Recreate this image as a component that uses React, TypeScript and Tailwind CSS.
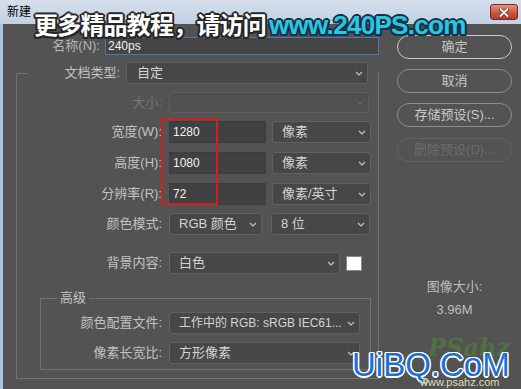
import type { ReactNode } from 'react';

const FONT = "font-['Liberation_Sans','Noto_Sans_CJK_SC',sans-serif]";

function Chevron({ dim }: { dim?: boolean }) {
  return (
    <svg width="8" height="5" viewBox="0 0 8 5" className="shrink-0">
      <path d="M1 1l3 3 3-3" fill="none" stroke={dim ? '#686868' : '#c4c4c4'} strokeWidth="1.2" />
    </svg>
  );
}

function Select({ value, className, disabled }: { value?: string; className: string; disabled?: boolean }) {
  return (
    <div
      className={`flex h-[22px] items-center justify-between rounded-[3px] border pl-[9px] pr-[4px] text-[13px] ${
        disabled ? 'border-[#5e5e5e] bg-[#505050]' : 'border-[#606060] bg-[#474747] text-[#d4d4d4]'
      } ${className}`}
    >
      <span className="overflow-hidden whitespace-nowrap">{value}</span>
      <Chevron dim={disabled} />
    </div>
  );
}

function NumInput({ value }: { value: string }) {
  return (
    <div className="flex h-[22px] w-[97px] items-center border border-[#3c3c3c] bg-[#414141] pl-[3px] text-[12px] text-[#f2f2f2]">
      {value}
    </div>
  );
}

function Row({ label, labelW, dim, children }: { label: string; labelW: string; dim?: boolean; children: ReactNode }) {
  return (
    <div className="flex h-[22px] items-center">
      <span className={`${labelW} shrink-0 text-right text-[13px] ${dim ? 'text-[#767676]' : 'text-[#c2c2c2]'}`}>{label}</span>
      <div className="ml-[7px] flex items-center">{children}</div>
    </div>
  );
}

function Btn({ label, primary, disabled }: { label: string; primary?: boolean; disabled?: boolean }) {
  const tone = disabled
    ? 'border-[#626262] text-[#6c6c6c]'
    : primary
      ? 'border-[#c9c9c9] text-[#c4c4c4]'
      : 'border-[#8c8c8c] text-[#c8c8c8]';
  return (
    <button className={`flex h-[24px] w-[115px] items-center justify-center rounded-full border text-[13px] ${tone}`}>
      {label}
    </button>
  );
}

export default function App() {
  return (
    <div className={`relative h-[389px] w-[521px] overflow-hidden bg-[#535353] ${FONT}`}>
      {/* title bar */}
      <div className="flex h-[24px] items-center justify-between bg-gradient-to-b from-[#d4dfeb] to-[#c1d1e3] pl-[7px] pr-[3px]">
        <span className="text-[12px] text-black">新建</span>
        <div className="flex h-[16px] w-[28px] items-center justify-center rounded-[3px] border border-[#7a2a22] bg-gradient-to-b from-[#e3907f] via-[#cf5a45] to-[#b8382a]">
          <svg width="10" height="9" viewBox="0 0 10 9">
            <path d="M1.5 1l7 7M8.5 1l-7 7" stroke="#5a1a14" strokeWidth="3.2" strokeLinecap="round" />
            <path d="M1.5 1l7 7M8.5 1l-7 7" stroke="#fff" strokeWidth="2" strokeLinecap="round" />
          </svg>
        </div>
      </div>

      <div className="flex h-[365px] border-l-[3px] border-[#a8c5e4]">
        {/* left column */}
        <div className="w-[376px] shrink-0">
          <div className="mt-[13px] flex h-[18px] items-center">
            <span className="w-[97px] text-right text-[13px] text-[#b4b4b4]">名称(N):</span>
            <div className="ml-[5px] flex h-[18px] w-[274px] items-center border border-[#4a78b0] bg-[#454545] pl-[2px] text-[12px] text-[#f0f0f0]">
              240ps
            </div>
          </div>

          <fieldset className="ml-[13px] mt-[7px] w-[363px] border border-[#727272] pb-[8px]">
            <legend className="ml-[10px] flex w-[350px] items-center pr-[9px]">
              <span className="w-[93px] text-right text-[13px] text-[#c2c2c2]">文档类型:</span>
              <Select value="自定" className="ml-[6px] w-[242px] pl-[10px]" />
            </legend>

            <div className="mt-[8px] flex h-[21px] items-center">
              <span className="w-[145px] text-right text-[13px] text-[#767676]">大小:</span>
              <Select className="ml-[7px] !h-[21px] w-[200px]" disabled />
            </div>

            <div className="mt-[8px]">
              <Row label="宽度(W):" labelW="w-[145px]">
                <NumInput value="1280" />
                <Select value="像素" className="ml-[6px] w-[99px]" />
              </Row>
            </div>
            <div className="mt-[9px]">
              <Row label="高度(H):" labelW="w-[145px]">
                <NumInput value="1080" />
                <Select value="像素" className="ml-[6px] w-[99px]" />
              </Row>
            </div>
            <div className="mt-[9px]">
              <Row label="分辨率(R):" labelW="w-[145px]">
                <NumInput value="72" />
                <Select value="像素/英寸" className="ml-[6px] w-[99px]" />
              </Row>
            </div>
            <div className="mt-[8px]">
              <Row label="颜色模式:" labelW="w-[145px]">
                <Select value="RGB 颜色" className="w-[93px]" />
                <Select value="8 位" className="ml-[9px] w-[99px]" />
              </Row>
            </div>
            <div className="mt-[17px]">
              <Row label="背景内容:" labelW="w-[145px]">
                <Select value="白色" className="w-[171px]" />
                <div className="ml-[6px] h-[15px] w-[16px] border border-[#8a8a8a] bg-white" />
              </Row>
            </div>

            <fieldset className="ml-[23px] mt-[17px] w-[331px] border border-[#727272] pb-[5px]">
              <legend className="ml-[16px] px-[3px] text-[13px] leading-[14px] text-[#c2c2c2]">高级</legend>
              <div className="mt-[7px]">
                <Row label="颜色配置文件:" labelW="w-[121px]">
                  <Select value="工作中的 RGB: sRGB IEC61..." className="w-[191px] !text-[12px]" />
                </Row>
              </div>
              <div className="mt-[8px]">
                <Row label="像素长宽比:" labelW="w-[121px]">
                  <Select value="方形像素" className="w-[191px]" />
                </Row>
              </div>
            </fieldset>
          </fieldset>
        </div>

        {/* right column */}
        <div className="flex flex-col pl-[18px] pt-[11px]">
          <Btn label="确定" primary />
          <div className="mt-[10px]">
            <Btn label="取消" />
          </div>
          <div className="mt-[10px]">
            <Btn label="存储预设(S)..." />
          </div>
          <div className="mt-[11px]">
            <Btn label="删除预设(D)..." disabled />
          </div>
          <div className="mt-[117px] w-[115px] text-center text-[13px] leading-[16px] text-[#bdbdbd]">图像大小:</div>
          <div className="mt-[7px] w-[115px] text-center text-[13px] leading-[16px] text-[#bdbdbd]">3.96M</div>
        </div>
      </div>

      {/* red highlight */}
      <div className="absolute left-[161px] top-[118px] h-[87px] w-[57px] border-2 border-[#d41f1f]" />

      {/* top watermark */}
      <div className="absolute left-[34px] top-[9px] flex items-baseline whitespace-nowrap font-bold">
        <span className="font-['Noto_Sans_CJK_SC',sans-serif] text-[24px] leading-[30px] tracking-[-0.8px] text-white [text-shadow:-2px_0_0_#262626,2px_0_0_#262626,0_-2px_0_#262626,0_2px_0_#262626,-1.5px_-1.5px_0_#262626,1.5px_-1.5px_0_#262626,-1.5px_1.5px_0_#262626,1.5px_1.5px_0_#262626]">
          更多精品教程，请访问
        </span>
        <span className="ml-[3px] text-[26px] leading-[30px] tracking-[-0.7px] text-[#2cc6e2] [text-shadow:-2px_0_0_#163246,2px_0_0_#163246,0_-2px_0_#163246,0_2px_0_#163246,-1.5px_-1.5px_0_#163246,1.5px_-1.5px_0_#163246,-1.5px_1.5px_0_#163246,1.5px_1.5px_0_#163246]">
          www.240PS.com
        </span>
      </div>

      {/* bottom watermark */}
      <div className="absolute left-[428px] top-[336px] font-['DejaVu_Serif',serif] text-[24px] font-bold italic leading-none text-[#4e8f34] opacity-50">
        PSahz
      </div>
      <div className="absolute left-[352px] top-[348px] whitespace-nowrap text-[33px] leading-none text-[#1b70d8] [text-shadow:-1.5px_0_0_#fff,1.5px_0_0_#fff,0_-1.5px_0_#fff,0_1.5px_0_#fff,-1px_-1px_0_#fff,1px_-1px_0_#fff,-1px_1px_0_#fff,1px_1px_0_#fff]">
        UiBQ.CoM
      </div>
      <div className="absolute left-[420px] top-[376px] whitespace-nowrap text-[11px] leading-[12px] text-[#e4e2c8] [text-shadow:0_0_2px_#3a3a2a]">
        www.psahz.com
      </div>
    </div>
  );
}
